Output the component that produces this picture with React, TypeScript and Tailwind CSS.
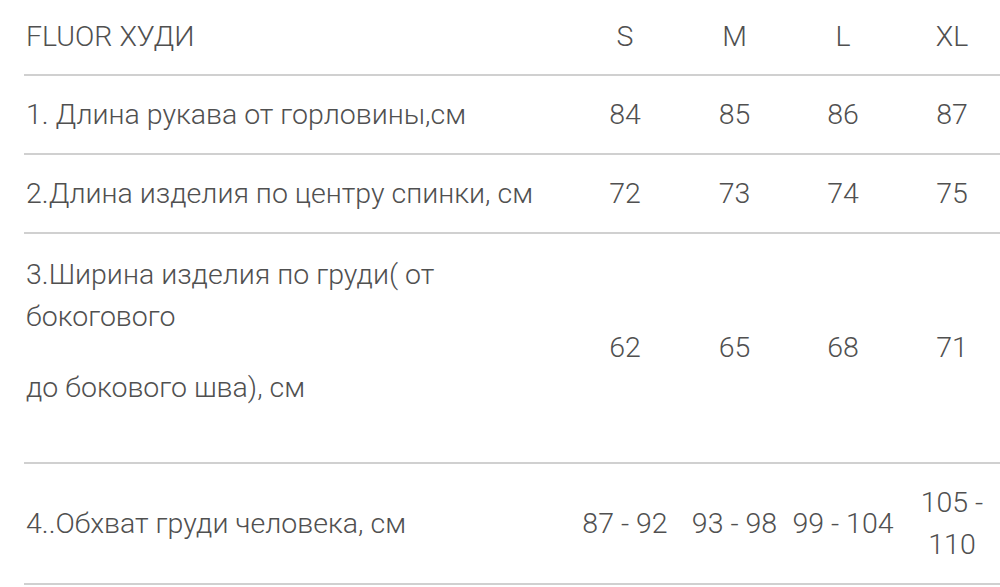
const sizes = ["S", "M", "L", "XL"];

const rows: { label: React.ReactNode; values: React.ReactNode[]; height: string; top?: boolean }[] = [
  {
    label: "1. Длина рукава от горловины,см",
    values: ["84", "85", "86", "87"],
    height: "h-[77px]",
  },
  {
    label: "2.Длина изделия по центру спинки, см",
    values: ["72", "73", "74", "75"],
    height: "h-[77px]",
  },
  {
    label: (
      <div className="pt-[20px]">
        <p>3.Ширина изделия по груди( от бокогового</p>
        <p className="mt-[29px]">до бокового шва), см</p>
      </div>
    ),
    values: ["62", "65", "68", "71"],
    height: "h-[228px]",
    top: true,
  },
  {
    label: "4..Обхват груди человека, см",
    values: ["87 - 92", "93 - 98", "99 - 104", "105 - 110"],
    height: "h-[119px]",
  },
];

const grid = "grid grid-cols-[546px_110px_109px_108px_110px] border-b-2 border-[#d0d0d0]";

export default function App() {
  return (
    <div className="w-[1000px] h-[587px] overflow-hidden bg-white font-['Roboto',sans-serif] font-light text-[28.5px] leading-[42px] text-[#505050]">
      <div className="ml-[24px] w-[983px]">
        <div className={`${grid} h-[76px]`}>
          <div className="flex items-center pl-[2px]">FLUOR ХУДИ</div>
          {sizes.map((s) => (
            <div key={s} className="flex items-center justify-center">
              {s}
            </div>
          ))}
        </div>
        {rows.map((row, i) => (
          <div key={i} className={`${grid} ${row.height} box-content`}>
            <div className={`flex pl-[2px] ${row.top ? "items-start" : "items-center"}`}>
              <div className="w-[540px]">{row.label}</div>
            </div>
            {row.values.map((v, j) => (
              <div key={j} className="flex items-center justify-center text-center px-[2px]">
                {v}
              </div>
            ))}
          </div>
        ))}
      </div>
    </div>
  );
}
